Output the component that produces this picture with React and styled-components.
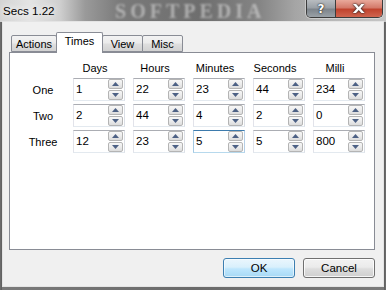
import React from 'react';
import styled, { createGlobalStyle } from 'styled-components';

const GlobalStyle = createGlobalStyle`
  html, body {
    margin: 0;
    padding: 0;
    background: #5e5e5e;
  }
  body {
    font-family: "Liberation Sans", Arial, sans-serif;
    font-size: 11px;
    color: #000;
  }
`;

const Window = styled.div`
  width: 386px;
  height: 290px;
  display: flex;
  flex-direction: column;
  overflow: hidden;
  background: linear-gradient(90deg, #8c8c8c 0px, #4a4a4a 1px, #7a7a7a 2px, #6a6a6a 50%, #7a7a7a calc(100% - 2px), #4a4a4a calc(100% - 1px), #8c8c8c 100%);
`;

const TitleBar = styled.div`
  height: 22px;
  flex-shrink: 0;
  display: flex;
  align-items: flex-start;
  overflow: hidden;
  background: linear-gradient(90deg, #d4d4d4 0px, #e4e4e4 30px, #cfcfcf 60px, #9a9a9a 85px, #7a7a7a 120px, #6e6e6e 200px, #858585 260px, #a5a5a5 295px, #b7b7b7 330px, #c5c5c5 386px);
`;

const Title = styled.div`
  padding: 4px 0 0 3px;
  font-family: "Liberation Sans", Arial, sans-serif;
  font-size: 11.6px;
  line-height: 13px;
  white-space: nowrap;
  text-shadow: 0 0 6px #fff, 0 0 10px #fff;
`;

const Watermark = styled.div`
  flex: 1;
  text-align: center;
  padding-left: 20px;
  font-family: "Liberation Serif", "Times New Roman", serif;
  font-weight: bold;
  font-size: 20px;
  line-height: 22px;
  letter-spacing: 4px;
  color: rgba(235, 235, 235, 0.5);
  filter: blur(1.3px);
  white-space: nowrap;
  user-select: none;
`;

const Caption = styled.div`
  display: flex;
  margin-right: 3px;
  height: 17px;
  border: 1px solid #3c3c3c;
  border-top: none;
  border-radius: 0 0 5px 5px;
  overflow: hidden;
  box-shadow: 0 0 0 1px rgba(255, 255, 255, 0.35);
`;

const CapBtn = styled.div`
  width: ${(p) => p.$w}px;
  display: flex;
  align-items: center;
  justify-content: center;
  color: #fff;
  font-family: "DejaVu Sans", sans-serif;
  font-weight: bold;
  font-size: 12px;
  line-height: 12px;
  text-shadow: 0 0 2px #222, 0 0 1px #000;
  background: ${(p) =>
    p.$close
      ? 'linear-gradient(#e9a99b 0%, #d47a6a 45%, #c0432e 55%, #d0654f 100%)'
      : 'linear-gradient(#b8bcc0 0%, #9aa0a6 45%, #7d848b 55%, #9aa1a7 100%)'};
  & + & {
    border-left: 1px solid #3c3c3c;
  }
`;

const CloseGlyph = styled.span`
  display: inline-block;
  transform: scaleX(1.35);
  font-size: 12px;
`;

const Body = styled.div`
  flex: 1;
  display: flex;
  flex-direction: column;
  margin: 0 3px 4px 3px;
  background: #f0f0f0;
  box-shadow: 0 0 0 1px #e4e4e4;
`;

const TabStrip = styled.div`
  display: flex;
  align-items: flex-end;
  padding: 10px 0 0 8px;
  height: 20px;
`;

const Tab = styled.div`
  position: relative;
  box-sizing: border-box;
  width: ${(p) => p.$w}px;
  height: ${(p) => (p.$active ? 21 : 17)}px;
  margin-left: ${(p) => (p.$first ? 0 : -1)}px;
  margin-bottom: ${(p) => (p.$active ? -1 : 0)}px;
  z-index: ${(p) => (p.$active ? 2 : 1)};
  padding-top: 2px;
  border: 1px solid #898c95;
  border-bottom: ${(p) => (p.$active ? 'none' : '1px solid #898c95')};
  border-radius: 2px 2px 0 0;
  text-align: center;
  line-height: 13px;
  background: ${(p) =>
    p.$active
      ? '#fff'
      : 'linear-gradient(#f3f3f3 0%, #ebebeb 45%, #dedede 55%, #d2d2d2 100%)'};
`;

const Panel = styled.div`
  box-sizing: border-box;
  height: 198px;
  margin: 0 8px 0 6px;
  border: 1px solid #898c95;
  background: #fff;
`;

const Grid = styled.div`
  display: grid;
  grid-template-columns: 44px repeat(5, 52px);
  grid-template-rows: 14px repeat(3, 23px);
  column-gap: 8px;
  row-gap: 3px;
  padding: 8px 0 0 11px;
`;

const Head = styled.div`
  width: 44px;
  text-align: center;
  line-height: 14px;
  white-space: nowrap;
`;

const RowLabel = styled.div`
  display: flex;
  align-items: center;
  justify-content: center;
  white-space: nowrap;
`;

const SpinBox = styled.div`
  box-sizing: border-box;
  display: flex;
  height: 23px;
  border: 1px solid;
  border-color: ${(p) =>
    p.$focus ? '#3d7bad #b5cfe7 #b7d9ed #a4c9e3' : '#abadb3 #dbdfe6 #e3e9ef #e2e3ea'};
  background: #fff;
`;

const Field = styled.div`
  flex: 1;
  display: flex;
  align-items: center;
  padding-left: 2px;
  font-size: 11.5px;
  line-height: 13px;
`;

const Spinner = styled.div`
  display: flex;
  flex-direction: column;
  gap: 1px;
  width: 15px;
  padding: 0 1px 0 0;
`;

const SpinBtn = styled.div`
  box-sizing: border-box;
  height: 10px;
  display: flex;
  align-items: center;
  justify-content: center;
  border: 1px solid #b4b4b4;
  border-radius: 2px;
  background: linear-gradient(#f7f7f7 0%, #ececec 50%, #dcdcdc 100%);
`;

const Buttons = styled.div`
  display: flex;
  justify-content: flex-end;
  gap: 8px;
  padding: 8px 8px 0 0;
`;

const Button = styled.div`
  box-sizing: border-box;
  width: 72px;
  height: 20px;
  display: flex;
  align-items: center;
  justify-content: center;
  border-radius: 3px;
  border: 1px solid ${(p) => (p.$default ? '#3c7fb1' : '#707070')};
  box-shadow: inset 0 0 0 1px ${(p) => (p.$default ? 'rgba(255,255,255,0.6)' : 'rgba(255,255,255,0.8)')};
  background: ${(p) =>
    p.$default
      ? 'linear-gradient(#eaf6fd 0%, #d9f0fc 45%, #bee6fd 55%, #a7d9f5 100%)'
      : 'linear-gradient(#f2f2f2 0%, #ebebeb 45%, #dddddd 55%, #cfcfcf 100%)'};
  font-size: 11.5px;
`;

const Arrow = ({ up }) => (
  <svg width="7" height="4" viewBox="0 0 7 4">
    <polygon points={up ? '0,4 7,4 3.5,0' : '0,0 7,0 3.5,4'} fill="#4d6185" />
  </svg>
);

const Spin = ({ value, focus }) => (
  <SpinBox $focus={focus}>
    <Field>{value}</Field>
    <Spinner>
      <SpinBtn>
        <Arrow up />
      </SpinBtn>
      <SpinBtn>
        <Arrow />
      </SpinBtn>
    </Spinner>
  </SpinBox>
);

const heads = ['Days', 'Hours', 'Minutes', 'Seconds', 'Milli'];
const rows = [
  { name: 'One', vals: ['1', '22', '23', '44', '234'] },
  { name: 'Two', vals: ['2', '44', '4', '2', '0'] },
  { name: 'Three', vals: ['12', '23', '5', '5', '800'] },
];
const tabs = [
  { label: 'Actions', w: 46 },
  { label: 'Times', w: 47, active: true },
  { label: 'View', w: 41 },
  { label: 'Misc', w: 41 },
];

export default function App() {
  return (
    <>
      <GlobalStyle />
      <Window>
        <TitleBar>
          <Title>Secs 1.22</Title>
          <Watermark>SOFTPEDIA</Watermark>
          <Caption>
            <CapBtn $w={28}>?</CapBtn>
            <CapBtn $w={46} $close>
              <CloseGlyph>X</CloseGlyph>
            </CapBtn>
          </Caption>
        </TitleBar>
        <Body>
          <TabStrip>
            {tabs.map((t, i) => (
              <Tab key={t.label} $w={t.w} $active={t.active} $first={i === 0}>
                {t.label}
              </Tab>
            ))}
          </TabStrip>
          <Panel>
            <Grid>
              <div />
              {heads.map((h) => (
                <Head key={h}>{h}</Head>
              ))}
              {rows.map((r, ri) => (
                <React.Fragment key={r.name}>
                  <RowLabel>{r.name}</RowLabel>
                  {r.vals.map((v, ci) => (
                    <Spin key={ci} value={v} focus={ri === 2 && ci === 2} />
                  ))}
                </React.Fragment>
              ))}
            </Grid>
          </Panel>
          <Buttons>
            <Button $default>OK</Button>
            <Button>Cancel</Button>
          </Buttons>
        </Body>
      </Window>
    </>
  );
}
